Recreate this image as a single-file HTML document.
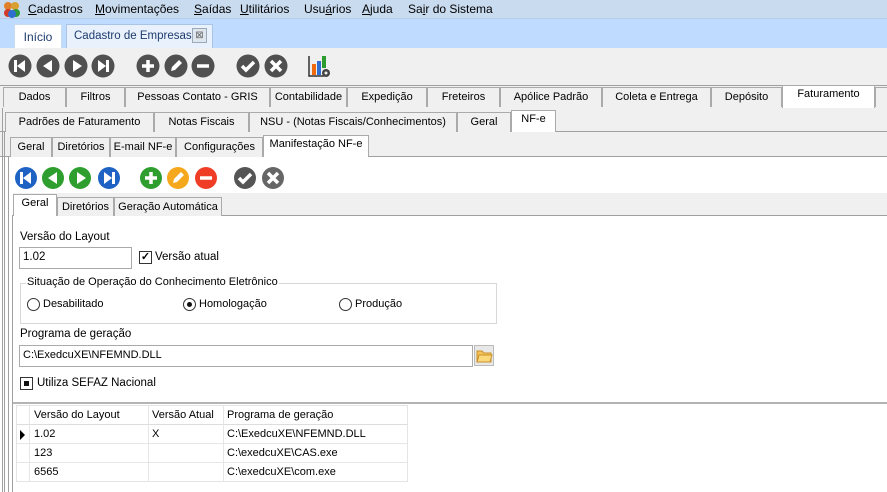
<!DOCTYPE html>
<html><head><meta charset="utf-8"><style>
*{margin:0;padding:0;box-sizing:border-box}
body{width:887px;height:492px;overflow:hidden;background:#fff;font-family:"Liberation Sans",Arial,sans-serif;font-size:11px;color:#000;position:relative}
.a{position:absolute}
.t{position:absolute;background:#f0f0f0;border:1px solid #aaa;border-bottom:none;text-align:center;line-height:19px;white-space:nowrap}
.s{background:#fff;line-height:17px}
.hl{position:absolute;height:0;border-top:2px solid #b4b4b4}
.vl{position:absolute;width:1px;background:#a0a0a0}
.inp{position:absolute;border:1px solid #aaa;background:#fff;padding-left:3px;line-height:19px}
.f{font-size:11.5px}
</style></head><body>
<div class="a" style="left:0;top:0;width:887px;height:19px;background:#c9dbef;border-bottom:1px solid #b8cce4"></div>
<svg class="a" style="left:3px;top:1px" width="18" height="17"><circle cx="5" cy="5" r="4" fill="#e0802a"/><circle cx="12" cy="5" r="4" fill="#d9a030"/><circle cx="5" cy="12" r="4" fill="#d23a2a"/><circle cx="13" cy="12" r="4" fill="#2f9a3a"/><circle cx="9" cy="13" r="4" fill="#2e6fd0"/></svg>
<div class="a" style="left:28px;top:2px;font-size:12px;line-height:15px;white-space:nowrap">
<span style="position:absolute;left:0"><u>C</u>adastros</span>
<span style="position:absolute;left:67px"><u>M</u>ovimentações</span>
<span style="position:absolute;left:166px"><u>S</u>aídas</span>
<span style="position:absolute;left:212px"><u>U</u>tilitários</span>
<span style="position:absolute;left:276px">Usu<u>á</u>rios</span>
<span style="position:absolute;left:334px"><u>A</u>juda</span>
<span style="position:absolute;left:380px">Sa<u>i</u>r do Sistema</span>
</div>
<div class="a" style="left:0;top:19px;width:887px;height:29px;background:#bfdbff"></div>
<div class="a" style="left:14px;top:24px;width:48px;height:24px;background:#fff;border:1px solid #c8dcf0;border-bottom:none;font-size:12px;line-height:24px;text-align:center;color:#1e3c6e">Início</div>
<div class="a" style="left:66px;top:24px;width:147px;height:24px;background:#e8f1fc;border:1px solid #a9c4e6;border-bottom:none;font-size:11.5px;line-height:22px;padding-left:7px;color:#1e3c6e;white-space:nowrap">Cadastro de Empresas</div>
<div class="a" style="left:192px;top:28px;width:15px;height:15px;border:1px solid #9ab;background:#e0e6ee;font-size:10px;line-height:13px;text-align:center;color:#666">⊠</div>
<div class="a" style="left:0;top:48px;width:887px;height:38px;background:#f0f0f0;border-bottom:1px solid #a0a0a0"></div>
<svg class="a" style="left:0;top:48px" width="340" height="38">
<g fill="#fff" stroke="#fff">
<g transform="translate(20,18)"><circle r="11.5" fill="#505050" stroke="none"/><rect x="-6" y="-6" width="3" height="12" stroke="none"/><path d="M5,-6 L-3,0 L5,6Z" stroke="none"/></g>
<g transform="translate(48,18)"><circle r="11.5" fill="#505050" stroke="none"/><path d="M4,-6 L-5,0 L4,6Z" stroke="none"/></g>
<g transform="translate(76,18)"><circle r="11.5" fill="#505050" stroke="none"/><path d="M-3,-6 L6,0 L-3,6Z" stroke="none"/></g>
<g transform="translate(103,18)"><circle r="11.5" fill="#505050" stroke="none"/><path d="M-5,-6 L3,0 L-5,6Z" stroke="none"/><rect x="3" y="-6" width="3" height="12" stroke="none"/></g>
<g transform="translate(148,18)"><circle r="11.5" fill="#505050" stroke="none"/><path d="M-6,0H6M0,-6V6" stroke-width="3.5" fill="none"/></g>
<g transform="translate(176,18)"><circle r="11.5" fill="#505050" stroke="none"/><path d="M-5,5 L-4,1 L3,-6 L6,-3 L-1,4Z" stroke="none"/></g>
<g transform="translate(203,18)"><circle r="11.5" fill="#505050" stroke="none"/><path d="M-6,0H6" stroke-width="3.5" fill="none"/></g>
<g transform="translate(248,18)"><circle r="11.5" fill="#505050" stroke="none"/><path d="M-6,0 L-2,4 L6,-4" stroke-width="3.5" fill="none"/></g>
<g transform="translate(276,18)"><circle r="11.5" fill="#505050" stroke="none"/><path d="M-5,-5L5,5M5,-5L-5,5" stroke-width="3.5" fill="none"/></g>
</g>
<g transform="translate(308,8)"><path d="M1,0V20H16" stroke="#333" stroke-width="1.5" fill="none"/><rect x="4" y="8" width="4" height="11" fill="#f06a10"/><rect x="9" y="5" width="4" height="14" fill="#2f6fd0"/><rect x="14" y="0" width="4" height="12" fill="#2d9c30"/><circle cx="18" cy="17" r="4" fill="#444"/><circle cx="18" cy="17" r="1.5" fill="#f0f0f0"/></g>
</svg>
<div class="a" style="left:0;top:86px;width:887px;height:22px;background:#f0f0f0"></div>
<div class="t" style="left:3px;top:87px;width:63px">Dados</div>
<div class="t" style="left:66px;top:87px;width:59px">Filtros</div>
<div class="t" style="left:125px;top:87px;width:145px">Pessoas Contato - GRIS</div>
<div class="t" style="left:270px;top:87px;width:77px">Contabilidade</div>
<div class="t" style="left:347px;top:87px;width:80px">Expedição</div>
<div class="t" style="left:427px;top:87px;width:73px">Freteiros</div>
<div class="t" style="left:500px;top:87px;width:102px">Apólice Padrão</div>
<div class="t" style="left:602px;top:87px;width:109px">Coleta e Entrega</div>
<div class="t" style="left:711px;top:87px;width:71px">Depósito</div>
<div class="t s" style="left:782px;top:85px;width:93px;height:24px">Faturamento</div>
<div class="t" style="left:875px;top:87px;width:14px">&nbsp;</div>
<div class="a" style="left:0;top:108px;width:887px;height:25px;background:#f0f0f0"></div>
<div class="a" style="left:0;top:131px;width:887px;border-top:1px solid #a0a0a0"></div>
<div class="t" style="left:5px;top:112px;width:149px">Padrões de Faturamento</div>
<div class="t" style="left:154px;top:112px;width:95px">Notas Fiscais</div>
<div class="t" style="left:249px;top:112px;width:208px">NSU - (Notas Fiscais/Conhecimentos)</div>
<div class="t" style="left:457px;top:112px;width:54px">Geral</div>
<div class="t s" style="left:511px;top:110px;width:45px;height:22px">NF-e</div>
<div class="a" style="left:0;top:132px;width:887px;height:25px;background:#f0f0f0"></div>
<div class="a" style="left:0;top:156px;width:887px;border-top:1px solid #a0a0a0"></div>
<div class="t" style="left:10px;top:137px;width:42px">Geral</div>
<div class="t" style="left:52px;top:137px;width:58px">Diretórios</div>
<div class="t" style="left:110px;top:137px;width:66px">E-mail NF-e</div>
<div class="t" style="left:176px;top:137px;width:87px">Configurações</div>
<div class="t s" style="left:263px;top:135px;width:106px;height:22px">Manifestação NF-e</div>
<svg class="a" style="left:0;top:165px" width="300" height="26">
<g fill="#fff" stroke="#fff">
<g transform="translate(26,13)"><circle r="11" fill="#1e63c4" stroke="none"/><rect x="-6" y="-6" width="3" height="12" stroke="none"/><path d="M5,-6 L-3,0 L5,6Z" stroke="none"/></g>
<g transform="translate(53,13)"><circle r="11" fill="#2e9e2e" stroke="none"/><path d="M4,-6 L-5,0 L4,6Z" stroke="none"/></g>
<g transform="translate(80,13)"><circle r="11" fill="#2e9e2e" stroke="none"/><path d="M-3,-6 L6,0 L-3,6Z" stroke="none"/></g>
<g transform="translate(109,13)"><circle r="11" fill="#1e63c4" stroke="none"/><path d="M-5,-6 L3,0 L-5,6Z" stroke="none"/><rect x="3" y="-6" width="3" height="12" stroke="none"/></g>
<g transform="translate(151,13)"><circle r="11" fill="#2e9e2e" stroke="none"/><path d="M-6,0H6M0,-6V6" stroke-width="3.5" fill="none"/></g>
<g transform="translate(178,13)"><circle r="11" fill="#f5a81c" stroke="none"/><path d="M-5,5 L-4,1 L3,-6 L6,-3 L-1,4Z" stroke="none"/></g>
<g transform="translate(206,13)"><circle r="11" fill="#f03e26" stroke="none"/><path d="M-6,0H6" stroke-width="3.5" fill="none"/></g>
<g transform="translate(245,13)"><circle r="11" fill="#555" stroke="none"/><path d="M-6,0 L-2,4 L6,-4" stroke-width="3.5" fill="none"/></g>
<g transform="translate(273,13)"><circle r="11" fill="#666" stroke="none"/><path d="M-5,-5L5,5M5,-5L-5,5" stroke-width="3.5" fill="none"/></g>
</g></svg>
<div class="a" style="left:13px;top:193px;width:874px;height:22px;background:#f0f0f0"></div>
<div class="a" style="left:13px;top:215px;width:874px;border-top:1px solid #a0a0a0"></div>
<div class="t s" style="left:13px;top:194px;width:44px;height:22px">Geral</div>
<div class="t" style="left:57px;top:197px;width:57px;line-height:18px">Diretórios</div>
<div class="t" style="left:114px;top:197px;width:108px;line-height:18px">Geração Automática</div>
<div class="vl" style="left:2px;top:108px;height:384px"></div>
<div class="vl" style="left:4px;top:132px;height:360px"></div>
<div class="vl" style="left:8px;top:157px;height:335px"></div>
<div class="vl" style="left:12px;top:215px;height:277px"></div>
<div class="a f" style="left:20px;top:231px">Versão do Layout</div>
<div class="inp f" style="left:19px;top:247px;width:113px;height:22px">1.02</div>
<div class="a" style="left:139px;top:251px;width:13px;height:13px;border:1px solid #333;font-size:11px;line-height:11px;text-align:center;font-weight:bold">✓</div>
<div class="a f" style="left:155px;top:251px">Versão atual</div>
<div class="a" style="left:20px;top:283px;width:477px;height:41px;border:1px solid #d8d8d8"></div>
<div class="a" style="left:26px;top:276px;background:#fff;padding:0 1px;font-size:11px">Situação de Operação do Conhecimento Eletrônico</div>
<div class="a" style="left:27px;top:298px;width:13px;height:13px;border:1px solid #333;border-radius:50%"></div>
<div class="a" style="left:43px;top:298px;font-size:11px">Desabilitado</div>
<div class="a" style="left:183px;top:298px;width:13px;height:13px;border:1px solid #333;border-radius:50%"><div style="margin:3px;width:5px;height:5px;border-radius:50%;background:#111"></div></div>
<div class="a" style="left:199px;top:298px;font-size:11px">Homologação</div>
<div class="a" style="left:339px;top:298px;width:13px;height:13px;border:1px solid #333;border-radius:50%"></div>
<div class="a" style="left:355px;top:298px;font-size:11px">Produção</div>
<div class="a f" style="left:20px;top:328px">Programa de geração</div>
<div class="inp" style="left:19px;top:345px;width:454px;height:22px">C:\ExedcuXE\NFEMND.DLL</div>
<div class="a" style="left:474px;top:345px;width:20px;height:21px;background:#e8e8e8;border:1px solid #bbb"><svg width="18" height="19"><path d="M2,5h5l2,2h7v9H2z" fill="#f3c358" stroke="#c8902a"/><path d="M4,9h13l-2,7H2z" fill="#fbd97a" stroke="#c8902a"/></svg></div>
<div class="a" style="left:20px;top:377px;width:13px;height:13px;border:1px solid #333"><div style="margin:3px;width:5px;height:5px;background:#111"></div></div>
<div class="a f" style="left:37px;top:377px">Utiliza SEFAZ Nacional</div>
<div class="hl" style="left:13px;top:402px;width:874px"></div>
<div class="a" style="left:16px;top:405px;width:392px;height:77px;border:1px solid #e4e4e4;font-size:11px">
<div class="a" style="left:0;top:0;width:390px;height:19px;background:#fff;border-bottom:1px solid #ddd"></div>
<div class="a" style="left:0;top:19px;width:390px;height:19px;border-bottom:1px solid #e6e6e6"></div>
<div class="a" style="left:0;top:38px;width:390px;height:19px;border-bottom:1px solid #e6e6e6"></div>
<div class="a" style="left:12px;top:0;width:1px;height:76px;background:#e6e6e6"></div>
<div class="a" style="left:131px;top:0;width:1px;height:76px;background:#e6e6e6"></div>
<div class="a" style="left:206px;top:0;width:1px;height:76px;background:#e6e6e6"></div>
<div class="a" style="left:17px;top:3px">Versão do Layout</div>
<div class="a" style="left:135px;top:3px">Versão Atual</div>
<div class="a" style="left:210px;top:3px">Programa de geração</div>
<div class="a" style="left:3px;top:24px;width:0;height:0;border-left:5px solid #000;border-top:5px solid transparent;border-bottom:5px solid transparent"></div>
<div class="a" style="left:17px;top:22px">1.02</div><div class="a" style="left:135px;top:22px">X</div><div class="a" style="left:210px;top:22px">C:\ExedcuXE\NFEMND.DLL</div>
<div class="a" style="left:17px;top:41px">123</div><div class="a" style="left:210px;top:41px">C:\exedcuXE\CAS.exe</div>
<div class="a" style="left:17px;top:60px">6565</div><div class="a" style="left:210px;top:60px">C:\exedcuXE\com.exe</div>
</div>
</body></html>
